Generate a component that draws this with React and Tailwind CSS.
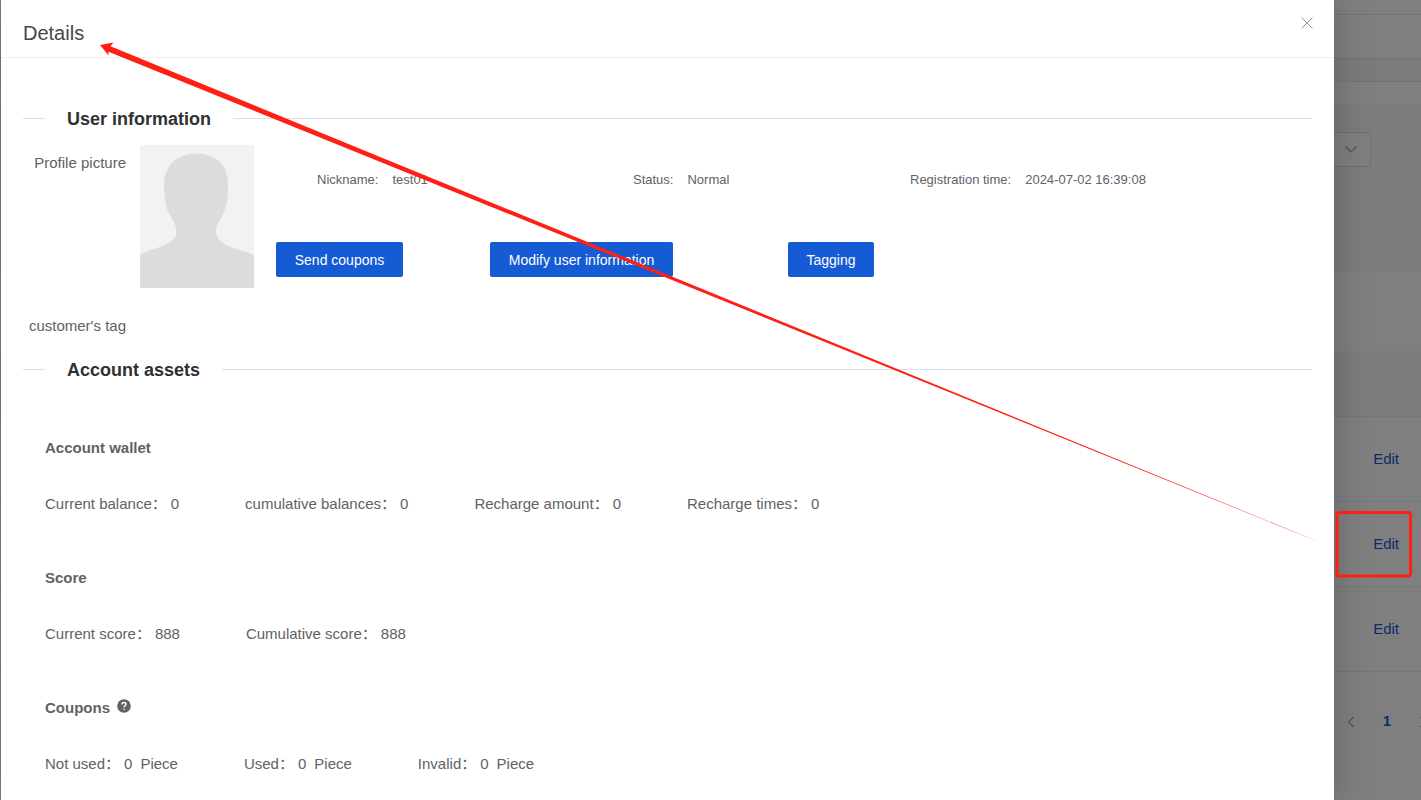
import React from "react";

const rows = [1, 2, 3];

const wallet = [
  { label: "Current balance", value: 0 },
  { label: "cumulative balances", value: 0 },
  { label: "Recharge amount", value: 0 },
  { label: "Recharge times", value: 0 },
];

const score = [
  { label: "Current score", value: 888 },
  { label: "Cumulative score", value: 888 },
];

const coupons = [
  { label: "Not used", value: 0, unit: "Piece" },
  { label: "Used", value: 0, unit: "Piece" },
  { label: "Invalid", value: 0, unit: "Piece" },
];

function Chevron({ className, d }) {
  return (
    <svg className={className} viewBox="0 0 14 14" fill="none" stroke="currentColor" strokeWidth="1.2">
      <path d={d} />
    </svg>
  );
}

// customer list that stays behind the drawer
function ListPage() {
  return (
    <div className="h-screen overflow-hidden bg-white">
      <div className="h-[15px] border-b border-[#e4e7ed]" />
      <div className="h-11 border-b border-[#e4e7ed]" />
      <div className="h-[23px] border-b border-[#e4e7ed] bg-[#f5f7fa]" />
      <div className="h-[22px]" />
      <div className="flex h-[168px] justify-end bg-[#f7f9fc] pt-7 pr-[50px]">
        <div className="relative h-[35px] w-[240px] text-[#a0a4ac]">
          <select
            aria-label="Filter"
            className="h-full w-full appearance-none rounded border border-[#dcdfe6] bg-white"
          />
          <Chevron className="absolute top-[10px] right-[13px] h-[14px] w-[14px]" d="M1.5 4.5L7 10l5.5-5.5" />
        </div>
      </div>
      <div className="h-[79px]" />
      <table className="w-full border-collapse">
        <thead>
          <tr className="h-[65px] border-b border-[#ebeef5] bg-[#f7f9fc]">
            <th />
          </tr>
        </thead>
        <tbody>
          {rows.map((row) => (
            <tr key={row} className="h-[85px] border-b border-[#ebeef5]">
              <td className="pr-[22px] text-right">
                <a href="#edit" className="text-[15px] text-[#155bd4]">
                  Edit
                </a>
              </td>
            </tr>
          ))}
        </tbody>
      </table>
      <div className="mt-[34px] -mr-[9px] flex h-8 items-center justify-end text-[#a0a4ac]">
        <button aria-label="Previous page">
          <Chevron className="h-[14px] w-[14px]" d="M9.5 2L4.5 7l5 5" />
        </button>
        <button className="w-[58px] text-[15px] font-bold text-[#155bd4]">1</button>
        <button aria-label="Next page">
          <Chevron className="h-[14px] w-[14px]" d="M4.5 2l5 5-5 5" />
        </button>
      </div>
    </div>
  );
}

function SectionTitle({ children }) {
  return (
    <div className="flex h-6 items-start">
      <div className="mt-[11px] h-px w-[22px] bg-[#dcdfe6]" />
      <h2 className="px-[22px] text-lg leading-6 font-bold text-[#303133]">{children}</h2>
      <div className="mt-[11px] h-px flex-1 bg-[#dcdfe6]" />
    </div>
  );
}

function Field({ label, value }) {
  return (
    <div className="flex gap-[14px] text-[13px] leading-5">
      <span>{label}:</span>
      <span>{value}</span>
    </div>
  );
}

function PrimaryButton({ className, children }) {
  return (
    <button className={`h-[35px] rounded-[2px] bg-[#155bd4] text-sm text-white ${className}`}>
      {children}
    </button>
  );
}

function AssetGroup({ title, icon, items }) {
  return (
    <div className="h-[130px] pl-[22px]">
      <h3 className="flex h-6 gap-[7px] text-[15px] leading-6 font-bold">
        {title}
        {icon}
      </h3>
      <div className="mt-8 flex gap-[66px] text-[15px] leading-6">
        {items.map((item) => (
          <div key={item.label} className="flex">
            <span className="mr-1">{item.label}：</span>
            <span>{item.value}</span>
            {item.unit && <span className="ml-2">{item.unit}</span>}
          </div>
        ))}
      </div>
    </div>
  );
}

function Avatar() {
  return (
    <svg className="h-[143px] w-[114px]" viewBox="0 0 114 143" role="img" aria-label="Profile picture">
      <rect width="114" height="143" fill="#f2f2f2" />
      <path
        fill="#dcdcdc"
        d="M0 143V110C9 105 18 103 25 100C31 97 36 93 36 89C38 77 28 73 26 59C24 50 24 44 24 38C25 20 38 8.500 57 8.500S88 21 88 38C88 45 88 54 86 61C83 73 75 79 76 88C77 94 82 98 88 101C96 104 105 106 114 110V143Z"
      />
    </svg>
  );
}

const helpIcon = (
  <svg className="mt-[3px] h-[14px] w-[14px]" viewBox="0 0 14 14">
    <circle cx="7" cy="7" r="6.800" fill="#606266" />
    <path
      d="M5 5.500C5 4.200 5.800 3.500 7 3.500S9 4.200 9 5.300C9 6.700 7 6.700 7 8.400M7 9.700V11"
      fill="none"
      stroke="#fff"
      strokeWidth="1.4"
    />
  </svg>
);

export default function App() {
  return (
    <div className="relative h-screen overflow-hidden font-['Liberation_Sans','Noto_Sans_CJK_SC',sans-serif] text-[#606266]">
      <ListPage />

      <div className="absolute inset-0 flex bg-black/50 pr-[87px] pl-px">
        <div
          role="dialog"
          aria-label="Details"
          className="flex-1 overflow-hidden bg-white shadow-[0_0_36px_rgba(0,0,0,0.22)]"
        >
          <header className="flex h-[58px] justify-between border-b border-[#ebeef5] pr-5 pl-[22px]">
            <h1 className="pt-[19px] text-xl leading-7 text-[#45474c]">Details</h1>
            <button aria-label="Close" className="mt-4 h-[14px] w-[14px] text-[#909399]">
              <svg viewBox="0 0 14 14" fill="none" stroke="currentColor">
                <path d="M1.500 1.500l11 11M12.500 1.500l-11 11" />
              </svg>
            </button>
          </header>

          <main className="px-[22px] pt-[49px]">
            <SectionTitle>User information</SectionTitle>
            <div className="mt-[14px] flex h-[143px] pr-[22px]">
              <div className="w-[103px] pt-[6px] text-right text-[15px] leading-6">Profile picture</div>
              <div className="ml-[14px]">
                <Avatar />
              </div>
              <div className="ml-[22px] flex-1 pt-[25px]">
                <div className="flex h-5 pl-[41px]">
                  <div className="w-[316px]">
                    <Field label="Nickname" value="test01" />
                  </div>
                  <div className="w-[277px]">
                    <Field label="Status" value="Normal" />
                  </div>
                  <Field label="Registration time" value="2024-07-02 16:39:08" />
                </div>
                <div className="mt-[52px] flex">
                  <PrimaryButton className="mr-[87px] w-[127px]">Send coupons</PrimaryButton>
                  <PrimaryButton className="mr-[115px] w-[183px]">Modify user information</PrimaryButton>
                  <PrimaryButton className="w-[86px]">Tagging</PrimaryButton>
                </div>
              </div>
            </div>
            <div className="mt-[26px] w-[103px] text-right text-[15px] leading-6">customer's tag</div>

            <div className="mt-5 mb-[54px]">
              <SectionTitle>Account assets</SectionTitle>
            </div>
            <AssetGroup title="Account wallet" items={wallet} />
            <AssetGroup title="Score" items={score} />
            <AssetGroup title="Coupons" icon={helpIcon} items={coupons} />
          </main>
        </div>
      </div>

      {/* arrow from the Edit link to the drawer title */}
      <svg
        className="pointer-events-none absolute top-0 left-0"
        width="1421"
        height="800"
        viewBox="0 0 1421 800"
        fill="none"
      >
        <path fill="#ff2015" d="M100 45L113.500 42.500L110.500 46.300L1324 544L108.500 51.800L108.500 55.500Z" />
        <rect x="1337" y="512.500" width="73.500" height="63.500" rx="2" stroke="#ff2015" strokeWidth="3" />
      </svg>
    </div>
  );
}
